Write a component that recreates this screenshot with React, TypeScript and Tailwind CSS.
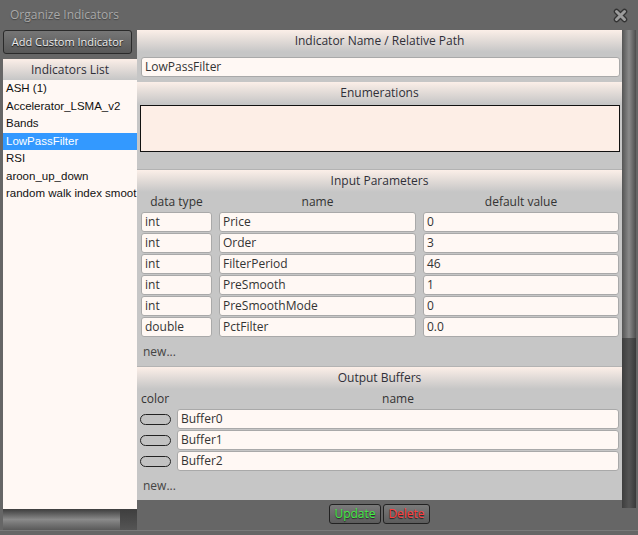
import React from "react"

const indicators = [
  "ASH (1)",
  "Accelerator_LSMA_v2",
  "Bands",
  "LowPassFilter",
  "RSI",
  "aroon_up_down",
  "random walk index smoot",
]

const params = [
  ["int", "Price", "0"],
  ["int", "Order", "3"],
  ["int", "FilterPeriod", "46"],
  ["int", "PreSmooth", "1"],
  ["int", "PreSmoothMode", "0"],
  ["double", "PctFilter", "0.0"],
]

const buffers = ["Buffer0", "Buffer1", "Buffer2"]

function Header({ title }: { title: string }) {
  return (
    <div className="h-[22px] bg-linear-to-b from-[#fcefe8] to-[#c6c6c6] flex items-center justify-center text-[12px] text-[#2f2f38]">
      {title}
    </div>
  )
}

function Cell({ value, className = "" }: { value: string; className?: string }) {
  return (
    <div
      className={
        "h-[20px] border border-[#a9a9a9] rounded-[3px] bg-[#fff8f4] pl-[3px] text-[12px] leading-[18px] text-[#333] whitespace-nowrap overflow-hidden " +
        className
      }
    >
      {value}
    </div>
  )
}

function CloseIcon() {
  return (
    <svg width="15" height="15" viewBox="0 0 15 15">
      <path d="M3.5 3.5 L11.5 11.5 M11.5 3.5 L3.5 11.5" stroke="#333" strokeWidth="5.5" strokeLinecap="round" />
      <path d="M3.5 3.5 L11.5 11.5 M11.5 3.5 L3.5 11.5" stroke="#9c9c9c" strokeWidth="3" strokeLinecap="round" />
    </svg>
  )
}

export default function App() {
  return (
    <div className="w-[638px] h-[535px] bg-[#666] overflow-hidden font-['Open_Sans',sans-serif] flex flex-col">
      {/* title bar */}
      <div className="h-[30px] flex items-center justify-between pl-[10px] pr-[10px]">
        <span className="text-[12px] text-[#a9a9a9] [text-shadow:0_1px_1px_#444]">Organize Indicators</span>
        <CloseIcon />
      </div>

      <div className="flex pl-[3px] h-[500px]">
        {/* left column */}
        <div className="w-[134px] flex flex-col">
          <button className="w-[129px] h-[24px] rounded-[3px] border border-[#2a2a2a] bg-linear-to-b from-[#767676] to-[#585858] text-[11px] text-[#ececec] [text-shadow:0_1px_1px_#111]">
            Add Custom Indicator
          </button>
          <div className="mt-[5px] h-[21px] bg-linear-to-b from-[#fcefe8] to-[#c6c6c6] flex items-center justify-center text-[12px] text-[#2f2f38]">
            Indicators List
          </div>
          <div className="flex-1 bg-[#fff8f4] font-['Liberation_Sans',Arial,sans-serif] text-[11.5px] overflow-hidden">
            {indicators.map((name) => (
              <div
                key={name}
                className={
                  name === "LowPassFilter"
                    ? "h-[17.5px] leading-[17.5px] pl-[3px] whitespace-nowrap overflow-hidden bg-[#3399ff] text-white"
                    : "h-[17.5px] leading-[17.5px] pl-[3px] whitespace-nowrap overflow-hidden text-[#111]"
                }
              >
                {name}
              </div>
            ))}
          </div>
          <div className="h-[21px] flex">
            <div className="w-[117px] bg-linear-to-b from-[#3e3e3e] via-[#8a8a8a] to-[#5a5a5a]" />
            <div className="flex-1 bg-linear-to-b from-[#3e3e3e] to-[#555]" />
          </div>
        </div>

        {/* right column */}
        <div className="w-[485px] flex flex-col">
          <div className="h-[470px] bg-[#c6c6c6] flex flex-col">
            {/* name section */}
            <Header title="Indicator Name / Relative Path" />
            <div className="pt-[5px] pb-[5px] pl-[4px] pr-[2px]">
              <Cell value="LowPassFilter" />
            </div>

            {/* enumerations */}
            <Header title="Enumerations" />
            <div className="mt-[1px] ml-[3px] mr-[2px] h-[48px] border border-[#111] bg-[#fdeee6]" />
            <div className="h-[17px]" />

            {/* input parameters */}
            <div className="border-t border-[#b3b3b3]">
              <Header title="Input Parameters" />
            </div>
            <div className="pl-[4px] pr-[3px]">
              <div className="grid grid-cols-[71px_197px_196px] gap-x-[7px] h-[20px] items-center text-[12px] text-[#333] text-center">
                <span>data type</span>
                <span>name</span>
                <span>default value</span>
              </div>
              <div className="flex flex-col gap-[1px]">
                {params.map(([t, n, v]) => (
                  <div key={n} className="grid grid-cols-[71px_197px_196px] gap-x-[7px]">
                    <Cell value={t} />
                    <Cell value={n} />
                    <Cell value={v} />
                  </div>
                ))}
              </div>
              <div className="h-[29px] flex items-center pl-[2px] text-[12px] text-[#444]">new...</div>
            </div>

            {/* output buffers */}
            <div className="border-t border-[#b3b3b3]">
              <Header title="Output Buffers" />
            </div>
            <div className="pl-[3px] pr-[3px]">
              <div className="h-[20px] flex items-center text-[12px] text-[#333]">
                <span className="w-[37px] pl-[1px]">color</span>
                <span className="flex-1 text-center">name</span>
              </div>
              <div className="flex flex-col gap-[1px]">
                {buffers.map((b) => (
                  <div key={b} className="flex items-center gap-[6px]">
                    <div className="w-[31px] h-[11px] rounded-full border border-[#222] bg-[#c2c2c2]" />
                    <Cell value={b} className="flex-1" />
                  </div>
                ))}
              </div>
              <div className="h-[29px] flex items-center pl-[3px] text-[12px] text-[#444]">new...</div>
            </div>
          </div>

          {/* bottom bar */}
          <div className="h-[30px] flex items-start justify-center pt-[4px] gap-[2px]">
            <button className="w-[52px] h-[20px] rounded-[3px] border border-[#222] bg-linear-to-b from-[#7a7a7a] to-[#5c5c5c] text-[12px] leading-[16px] text-[#44ee44] [text-shadow:0_1px_1px_#222]">
              Update
            </button>
            <button className="w-[47px] h-[20px] rounded-[3px] border border-[#222] bg-linear-to-b from-[#7a7a7a] to-[#5c5c5c] text-[12px] leading-[16px] text-[#ff3b3b] [text-shadow:0_1px_1px_#222]">
              Delete
            </button>
          </div>
        </div>

        {/* vertical scrollbar */}
        <div className="w-[14px] h-[478px] flex flex-col">
          <div className="h-[308px] bg-linear-to-r from-[#555] via-[#8a8a8a] to-[#4e4e4e]" />
          <div className="flex-1 bg-linear-to-r from-[#3e3e3e] via-[#555] to-[#3a3a3a]" />
        </div>
      </div>
      <div className="h-[5px] border-t border-[#7a7a7a]" />
    </div>
  )
}
